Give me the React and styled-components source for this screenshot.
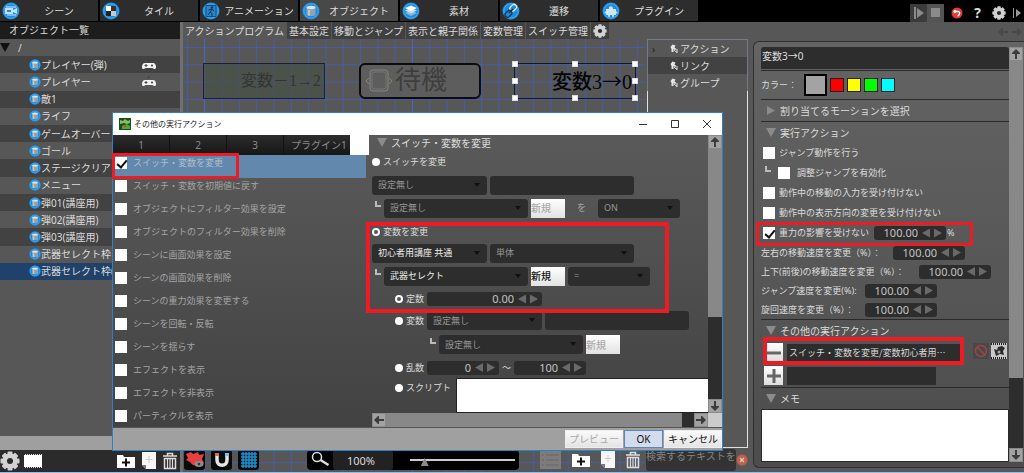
import React from "react"
import styled, { createGlobalStyle } from "styled-components"

const tabs = [
    { name: "シーン", icon: "scene" },
    { name: "タイル", icon: "tile" },
    { name: "アニメーション", icon: "anim" },
    { name: "オブジェクト", icon: "object" },
    { name: "素材", icon: "layers" },
    { name: "遷移", icon: "link" },
    { name: "プラグイン", icon: "plugin" },
]

const objects = [
    { name: "プレイヤー(弾)", pad: true },
    { name: "プレイヤー", pad: true },
    { name: "敵1" },
    { name: "ライフ" },
    { name: "ゲームオーバー" },
    { name: "ゴール" },
    { name: "ステージクリア" },
    { name: "メニュー" },
    { name: "弾01(講座用)" },
    { name: "弾02(講座用)" },
    { name: "弾03(講座用)" },
    { name: "武器セレクト枠" },
    { name: "武器セレクト枠(", selected: true },
]

const subTabs = [
    "アクションプログラム",
    "基本設定",
    "移動とジャンプ",
    "表示と親子関係",
    "変数管理",
    "スイッチ管理",
]

const actions = [
    "スイッチ・変数を変更",
    "スイッチ・変数を初期値に戻す",
    "オブジェクトにフィルター効果を設定",
    "オブジェクトのフィルター効果を削除",
    "シーンに画面効果を設定",
    "シーンの画面効果を削除",
    "シーンの重力効果を変更する",
    "シーンを回転・反転",
    "シーンを揺らす",
    "エフェクトを表示",
    "エフェクトを非表示",
    "パーティクルを表示",
]

const speeds = [
    { id: "speed-x", name: "左右の移動速度を変更（%）：", width: 132 },
    { id: "speed-y", name: "上下(前後)の移動速度を変更（%）：", width: 158 },
    { id: "speed-jump", name: "ジャンプ速度を変更(%):", width: 104 },
    { id: "speed-turn", name: "旋回速度を変更（%）：", width: 104 },
]

const handles = [
    [0, 0],
    [50, 0],
    [100, 0],
    [0, 50],
    [100, 50],
    [0, 100],
    [50, 100],
    [100, 100],
]

const discs = {
    scene: (
        <>
            <path d="M3 6h8v6H3zM11 8l4-2v6l-4-2z" fill="#bfe0f5" />
            <path d="M4 5h10M5 13h9" stroke="#d6ecfa" strokeWidth="1" />
            <path d="M5 8h4v2H5z" fill="#2f86c8" />
        </>
    ),
    tile: (
        <>
            <path d="M4 4h5v5H4z" fill="#fff" />
            <path d="M9 4h5v5H9z" fill="#333" />
            <path d="M4 9h5v5H4z" fill="#222" />
            <path d="M9 9h5v5H9z" fill="#c9c9c9" />
        </>
    ),
    anim: (
        <>
            <path d="M4 3.500h10v11H4z" fill="#2b86c8" stroke="#16507e" />
            <circle cx="10" cy="5.500" r="1.300" fill="#0f3858" />
            <path
                d="M10 7l-2 3 2 1.500v3M8 10l-2 3M6.500 8l3-1 2.500 2"
                fill="none"
                stroke="#0f3858"
                strokeWidth="1"
            />
        </>
    ),
    object: (
        <>
            <path d="M4.500 5.500v7c0 2 9 2 9 0v-7z" fill="#8fa3ad" />
            <ellipse cx="9" cy="5.500" rx="4.500" ry="1.700" fill="#dbe4e7" />
            <path d="M7 8v5.500" stroke="#c9d4d9" strokeWidth="1.500" />
        </>
    ),
    layers: (
        <>
            <path d="M9 8.500l6 2.500-6 3-6-3z" fill="#8fb6cf" />
            <path d="M9 6l6 2.500-6 3-6-3z" fill="#c7deed" />
            <path d="M9 3.500l6 2.500-6 3-6-3z" fill="#fff" />
        </>
    ),
    link: (
        <g fill="none" strokeWidth="1.300">
            <rect x="7.500" y="3.500" width="7.500" height="5" rx="2.500" transform="rotate(-45 11 6)" stroke="#dcecf8" />
            <rect x="3" y="9" width="7.500" height="5" rx="2.500" transform="rotate(-45 7 12)" stroke="#17354c" />
            <path d="M7 11l4-4" stroke="#17354c" />
        </g>
    ),
    plugin: (
        <path
            d="M4 7h3c-1-3 4-4 4 0h3v2.500c2 0 2 2 0 2V13h-2c0 3-2 3-2 0H8c0 3-2 3-2 0H4v-1.500c-2 0-2-2 0-2z"
            fill="#cfe6f5"
        />
    ),
}

function Disc({ kind, size = 18 }) {
    return (
        <svg width={size} height={size} viewBox="0 0 18 18">
            <circle cx="9" cy="9" r="8.500" fill="#1c8be0" />
            <circle cx="9" cy="9" r="7.200" fill="none" stroke="#4db1f5" strokeWidth="0.800" />
            {discs[kind]}
        </svg>
    )
}

function Gear({ size = 16 }) {
    return (
        <svg width={size} height={size} viewBox="0 0 20 20">
            <g fill="#d2d2d2">
                {[0, 45, 90, 135].map((a) => (
                    <rect
                        key={a}
                        x="7.500"
                        y="0.500"
                        width="5"
                        height="19"
                        rx="1"
                        transform={`rotate(${a} 10 10)`}
                    />
                ))}
                <circle cx="10" cy="10" r="7.500" />
            </g>
            <circle cx="10" cy="10" r="3" fill="#2a2a2a" />
        </svg>
    )
}

function Gamepad() {
    return (
        <svg width="14" height="12" viewBox="0 0 14 12">
            <path d="M6 2l1-1.500" stroke="#333" />
            <path
                d="M3 4h8c2 0 3 2 3 4 0 2.500-2 2.500-3.500 1h-7C2 10.500 0 10.500 0 8c0-2 1-4 3-4z"
                fill="#f2f2f2"
            />
            <path d="M2.500 6.500h3M4 5v3" stroke="#444" />
            <circle cx="10" cy="6.500" r="1.100" fill="#444" />
        </svg>
    )
}

function FolderPlus() {
    return (
        <svg width="18" height="16" viewBox="0 0 18 16">
            <path d="M0 2h6l1 2h11v11H0z" fill="#fff" />
            <path d="M9 5.500v8M5 9.500h8" stroke="#111" strokeWidth="2" />
        </svg>
    )
}

function PagePlus() {
    return (
        <svg width="14" height="18" viewBox="0 0 14 18">
            <path d="M0 0h14v17H4l-4-4z" fill="#f6f6f6" />
            <path d="M0 13h4v4z" fill="#777" />
            <path d="M7 4v7M3.500 7.500h7" stroke="#ccc" strokeWidth="1" />
        </svg>
    )
}

function Trash() {
    return (
        <svg width="14" height="18" viewBox="0 0 14 18">
            <path d="M4.500 3.500V1.500h5v2M0 4h14" fill="none" stroke="#ddd" strokeWidth="1.500" />
            <path d="M1.500 6.500h11v10h-11z" fill="none" stroke="#ddd" strokeWidth="1.500" />
            <path d="M4.500 7v9M7 7v9M9.500 7v9" stroke="#ddd" strokeWidth="1.200" />
        </svg>
    )
}

function Arrow({ dir }) {
    const turn = { up: 0, right: 90, down: 180, left: 270 }[dir]
    return (
        <svg width="10" height="10" viewBox="0 0 10 10">
            <path
                d="M5 0l4 4v1H6v5H4V5H1V4z"
                fill="#3c3c3c"
                transform={`rotate(${turn} 5 5)`}
            />
        </svg>
    )
}

function ActionMark() {
    return (
        <svg width="8" height="9" viewBox="0 0 8 9">
            <path d="M0.500 3l2-2.500 3 1-1 2 2 1.500-1.500 1L3.500 5v3H1.500V5z" fill="#e6e6e6" />
            <path d="M4 6l3 2.500M7 5v4" stroke="#e6e6e6" />
        </svg>
    )
}

function Corner() {
    return (
        <CornerMark width="6" height="6" viewBox="0 0 6 6">
            <path d="M1 0v5h5" fill="none" stroke="#bbb" strokeWidth="2" />
        </CornerMark>
    )
}

function Drop({ label, width, on, value }) {
    return (
        <SelectWrap $width={width}>
            <Select aria-label={label} $on={on} defaultValue={value}>
                <option>{value}</option>
            </Select>
        </SelectWrap>
    )
}

function Spinner({ id, label, value, width = 72 }) {
    return (
        <SpinWrap $width={width}>
            <SpinInput id={id} aria-label={label} defaultValue={value} />
            <Step type="button" aria-label="減らす" $side="left" />
            <Step type="button" aria-label="増やす" $side="right" />
        </SpinWrap>
    )
}

function VScroll({ thumb }) {
    return (
        <ScrollColumn>
            <ScrollEnd type="button" aria-label="上へ">
                <Arrow dir="up" />
            </ScrollEnd>
            <ScrollThumb $size={thumb} />
            <ScrollTrack $size={100 - thumb} />
            <ScrollEnd type="button" aria-label="下へ">
                <Arrow dir="down" />
            </ScrollEnd>
        </ScrollColumn>
    )
}

function TopBar() {
    return (
        <Top>
            {tabs.map((t) => (
                <TopTab key={t.name} type="button" $active={t.icon === "object"}>
                    <Disc kind={t.icon} />
                    <span>{t.name}</span>
                </TopTab>
            ))}
            <TopTools>
                <PlayButton type="button" aria-label="再生">
                    <svg width="12" height="12" viewBox="0 0 12 12">
                        <path d="M1 0h2v12H1zM4 1l7 5-7 5z" fill="#8a8a8a" />
                    </svg>
                </PlayButton>
                <PlayButton type="button" aria-label="停止" $lit>
                    <svg width="10" height="10" viewBox="0 0 10 10">
                        <path d="M0 0h9v9H0z" fill="#8a8a8a" />
                    </svg>
                </PlayButton>
                <ToolButton type="button" aria-label="元に戻す">
                    <svg width="12" height="12" viewBox="0 0 12 12">
                        <circle cx="6" cy="6" r="5.500" fill="#e23a36" />
                        <path
                            d="M3 4.500h4c2.500 0 2 3.500-0.500 4.500M4.500 3L3 4.500 4.500 6"
                            fill="none"
                            stroke="#fff"
                            strokeWidth="1.400"
                        />
                    </svg>
                </ToolButton>
                <ToolButton type="button">?</ToolButton>
                <ToolButton type="button" aria-label="設定">
                    <Gear size={14} />
                </ToolButton>
                <ToolButton type="button" aria-label="次へ">
                    <svg width="10" height="10" viewBox="0 0 10 10">
                        <path d="M1 0h1v10H1zM4 1l5 4-5 4z" fill="#999" />
                    </svg>
                </ToolButton>
            </TopTools>
        </Top>
    )
}

function ObjectList() {
    return (
        <Side>
            <SideTitle>オブジェクト一覧</SideTitle>
            <Tree>
                <RootRow>
                    <Triangle $dir="down" $color="#111" />
                    <span>/</span>
                </RootRow>
                {objects.map((o, i) => (
                    <TreeRow key={o.name} $dark={i % 2 === 0} $selected={o.selected}>
                        <Disc kind="object" size={12} />
                        <TreeName>{o.name}</TreeName>
                        {o.pad && <Gamepad />}
                    </TreeRow>
                ))}
            </Tree>
            <SideScroll />
            <SideTools>
                <Bare type="button" aria-label="設定">
                    <Gear size={20} />
                </Bare>
                <Bare type="button" aria-label="フィルム">
                    <svg width="18" height="16" viewBox="0 0 18 16">
                        <path d="M0 2h18v12H0z" fill="#fff" />
                        <path d="M1 1.500h17M1 14.500h17" stroke="#ddd" strokeDasharray="1 1" />
                    </svg>
                </Bare>
                <SideGroup>
                    <Bare type="button" aria-label="フォルダ追加">
                        <FolderPlus />
                    </Bare>
                    <Bare type="button" aria-label="追加">
                        <PagePlus />
                    </Bare>
                    <Bare type="button" aria-label="削除">
                        <Trash />
                    </Bare>
                </SideGroup>
            </SideTools>
        </Side>
    )
}

function Workspace() {
    return (
        <Center>
            <SubBar>
                {subTabs.map((t, i) => (
                    <SubTab key={t} type="button" $active={i === 0}>
                        {t}
                    </SubTab>
                ))}
                <SubTab type="button" aria-label="タブ設定">
                    <Gear size={14} />
                </SubTab>
            </SubBar>
            <Stage>
                <Lines>
                    <defs>
                        <pattern
                            id="lines"
                            x="4"
                            y="8"
                            width="17.300"
                            height="17.300"
                            patternUnits="userSpaceOnUse"
                        >
                            <path d="M0.500 0v18M0 0.500h18" stroke="#485ca4" strokeWidth="1" />
                        </pattern>
                    </defs>
                    <rect width="100%" height="100%" fill="url(#lines)" />
                    <path d="M21.500 0v500M229.500 0v500" stroke="#4a66c4" />
                </Lines>
                <Node $x={20} $kind="plain">
                    変数－1→2
                </Node>
                <Node $x={176} $kind="round">
                    <svg width="28" height="26" viewBox="0 0 28 26">
                        <rect x="5" y="2" width="18" height="21" rx="3" fill="none" stroke="#858585" />
                        <rect x="7" y="4" width="14" height="17" rx="2" fill="none" stroke="#777" />
                        <path d="M4 10l-3 3 3 3M24 10l3 3-3 3" fill="none" stroke="#8a8a50" />
                    </svg>
                    待機
                </Node>
                <Node $x={331} $kind="picked">
                    <span>
                        変数3<LongArrow>→</LongArrow>0
                    </span>
                    {handles.map(([x, y]) => (
                        <Handle key={`${x}-${y}`} $x={x} $y={y} />
                    ))}
                </Node>
                <Palette>
                    <PaletteRow>
                        <PaletteChevron>›</PaletteChevron>
                        <ActionMark />
                        アクション
                    </PaletteRow>
                    <PaletteRow $dark>
                        <PaletteChevron />
                        <ActionMark />
                        リンク
                    </PaletteRow>
                    <PaletteRow>
                        <PaletteChevron />
                        <ActionMark />
                        グループ
                    </PaletteRow>
                    <PaletteBody />
                </Palette>
                <StageTools>
                    <BlackButton type="button" aria-label="表示">
                        <svg width="21" height="18" viewBox="0 0 21 18">
                            <path d="M2 3l5-2 2 2 5-2 1 3 5-1-2 5 2 4-6 3-5-1-3-3-4-2 2-2z" fill="#e8403c" />
                            <ellipse cx="15" cy="13" rx="4.500" ry="3" fill="#8c8c8c" />
                            <circle cx="15" cy="13" r="1.300" fill="#333" />
                        </svg>
                    </BlackButton>
                    <BlackButton type="button" aria-label="吸着">
                        <svg width="18" height="18" viewBox="0 0 18 18">
                            <path
                                d="M4 3v6c0 7 10 7 10 0V3"
                                fill="none"
                                stroke="#e6e6e6"
                                strokeWidth="3.500"
                            />
                            <path d="M2 2h4v3H2z" fill="#e8693a" />
                            <path d="M12 2h4v3h-4z" fill="#6cc3ef" />
                        </svg>
                    </BlackButton>
                    <BlackButton type="button" aria-label="グリッド">
                        <svg width="18" height="18" viewBox="0 0 18 18">
                            <path
                                d="M1 3h16M1 6h16M1 9h16M1 12h16M1 15h16M3 1v16M6 1v16M9 1v16M12 1v16M15 1v16"
                                stroke="#1e93d6"
                                strokeWidth="1.400"
                            />
                        </svg>
                    </BlackButton>
                    <ZoomBox>
                        <svg width="26" height="18" viewBox="0 0 26 18">
                            <circle cx="10" cy="6" r="4.500" fill="none" stroke="#ddd" strokeWidth="1.500" />
                            <path d="M13.500 9l8 5" stroke="#ddd" strokeWidth="2.500" />
                        </svg>
                        <ZoomValue aria-label="倍率" defaultValue="100%" />
                        <ZoomSlider type="range" aria-label="ズーム" defaultValue="11" />
                    </ZoomBox>
                    <PaletteTools>
                        <Bare type="button" aria-label="一覧">
                            <svg width="21" height="18" viewBox="0 0 21 18">
                                <path d="M0 0h21v18H0z" fill="#7c7c7c" />
                                <path d="M2 4h2M6 4h13M2 9h2M6 9h13M2 14h2M6 14h13" stroke="#666" />
                            </svg>
                        </Bare>
                        <Bare type="button" aria-label="フォルダ追加">
                            <FolderPlus />
                        </Bare>
                        <Bare type="button" aria-label="追加">
                            <PagePlus />
                        </Bare>
                        <Bare type="button" aria-label="削除">
                            <Trash />
                        </Bare>
                    </PaletteTools>
                    <SearchGroup>
                        <SearchBox aria-label="検索" placeholder="検索するテキストを" />
                        <Bare type="button" aria-label="クリア">
                            <svg width="12" height="12" viewBox="0 0 12 12">
                                <circle cx="6" cy="6" r="5.500" fill="#c0604a" />
                                <path d="M4 4l4 4M8 4l-4 4" stroke="#e5c5bb" strokeWidth="1.300" />
                            </svg>
                        </Bare>
                    </SearchGroup>
                </StageTools>
            </Stage>
        </Center>
    )
}

function Properties() {
    return (
        <Aside>
            <AsideTop>
                <Arrow dir="left" />
                <Arrow dir="right" />
            </AsideTop>
            <Panel>
                <PanelBody>
                    <NameBox aria-label="名前" defaultValue="変数3→0" />
                    <ColorRow>
                        カラー：
                        <Swatch type="button" aria-label="灰" $color="#a3a3a3" $big />
                        <Swatch type="button" aria-label="赤" $color="#ff0000" />
                        <Swatch type="button" aria-label="黄" $color="#ffff00" />
                        <Swatch type="button" aria-label="緑" $color="#00ff00" />
                        <Swatch type="button" aria-label="水色" $color="#00ffff" />
                    </ColorRow>
                    <Section>
                        <Triangle $dir="right" />
                        割り当てるモーションを選択
                    </Section>
                    <Section>
                        <Triangle $dir="down" />
                        実行アクション
                    </Section>
                    <CheckRow>
                        <Check type="checkbox" id="jump" />
                        <label htmlFor="jump">ジャンプ動作を行う</label>
                    </CheckRow>
                    <CheckRow $sub>
                        <Corner />
                        <Check type="checkbox" id="adjust" />
                        <label htmlFor="adjust">調整ジャンプを有効化</label>
                    </CheckRow>
                    <CheckRow>
                        <Check type="checkbox" id="no-input" />
                        <label htmlFor="no-input">動作中の移動の入力を受け付けない</label>
                    </CheckRow>
                    <CheckRow>
                        <Check type="checkbox" id="no-turn" />
                        <label htmlFor="no-turn">動作中の表示方向の変更を受け付けない</label>
                    </CheckRow>
                    <CheckRow>
                        <Check type="checkbox" id="no-gravity" defaultChecked />
                        <GravityLabel htmlFor="no-gravity">重力の影響を受けない</GravityLabel>
                        <Spinner label="重力" value="100.00" />
                        <span>%</span>
                        <Mark $top={-1} $left={-5} $width={217} $height={24} />
                    </CheckRow>
                    {speeds.map((s) => (
                        <SpeedRow key={s.id}>
                            <SpeedLabel htmlFor={s.id} $width={s.width}>
                                {s.name}
                            </SpeedLabel>
                            <Spinner id={s.id} value="100.00" />
                        </SpeedRow>
                    ))}
                    <Section>
                        <Triangle $dir="down" />
                        その他の実行アクション
                    </Section>
                    <OtherRow>
                        <Sign type="button" aria-label="削除">
                            <svg width="14" height="14" viewBox="0 0 14 14">
                                <path d="M0 7h14" stroke="#666" strokeWidth="3" />
                            </svg>
                        </Sign>
                        <OtherBox $width={173} aria-label="アクション1" defaultValue="スイッチ・変数を変更/変数初心者用…" />
                        <OtherIcons>
                            <svg width="16" height="16" viewBox="0 0 16 16">
                                <path d="M0 0h16v16H0z" fill="#484848" />
                                <circle cx="8" cy="8" r="5.500" fill="none" stroke="#a04444" strokeWidth="1.500" />
                                <path d="M4 4l8 8" stroke="#a04444" strokeWidth="1.500" />
                            </svg>
                            <svg width="16" height="16" viewBox="0 0 16 16">
                                <path d="M0 0h16v16H0z" fill="#c8c8c8" />
                                <path d="M0 1h16M0 15h16" stroke="#222" strokeWidth="2" strokeDasharray="1 1" />
                                <path d="M3 6l3 1 1-3 4-1 3 2-2 3 1 4-4-1-4 2z" fill="#2b2b2b" />
                                <circle cx="8" cy="9" r="1.500" fill="#aaa" />
                            </svg>
                        </OtherIcons>
                        <Mark $top={-4} $left={2} $width={201} $height={28} $thick />
                    </OtherRow>
                    <OtherRow>
                        <Sign type="button" aria-label="追加">
                            <svg width="14" height="14" viewBox="0 0 14 14">
                                <path d="M0 7h14M7 0v14" stroke="#666" strokeWidth="3" />
                            </svg>
                        </Sign>
                        <OtherBox $width={149} aria-label="アクション2" />
                    </OtherRow>
                    <Section>
                        <Triangle $dir="down" />
                        メモ
                    </Section>
                    <Memo aria-label="メモ" />
                </PanelBody>
                <VScroll thumb={82} />
            </Panel>
        </Aside>
    )
}

function ActionDialog() {
    return (
        <Window role="dialog" aria-label="その他の実行アクション">
            <TitleBar>
                <svg width="12" height="12" viewBox="0 0 12 12">
                    <path d="M0 0h12v12H0z" fill="#1f4a22" />
                    <path d="M1 2l3 1 2-2 3 2 2-1v3L8 6 5 5 1 6z" fill="#7fc35c" />
                    <path d="M3 8l5-2 3 2v3H3z" fill="#3fae3a" />
                    <circle cx="6" cy="8" r="1.500" fill="#d7462f" />
                </svg>
                <TitleText>その他の実行アクション</TitleText>
                <WindowButton type="button" aria-label="最小化">
                    <svg width="8" height="8" viewBox="0 0 8 8">
                        <path d="M0 4.500h8" stroke="#333" />
                    </svg>
                </WindowButton>
                <WindowButton type="button" aria-label="最大化">
                    <svg width="8" height="8" viewBox="0 0 8 8">
                        <path d="M0.500 0.500h7v7h-7z" fill="none" stroke="#333" />
                    </svg>
                </WindowButton>
                <WindowButton type="button" aria-label="閉じる">
                    <svg width="8" height="8" viewBox="0 0 8 8">
                        <path d="M0 0l8 8M8 0l-8 8" stroke="#333" />
                    </svg>
                </WindowButton>
            </TitleBar>
            <WindowBody>
                <ActionList>
                    <PageTabs>
                        <PageTab type="button">1</PageTab>
                        <PageTab type="button">2</PageTab>
                        <PageTab type="button">3</PageTab>
                        <PageTab type="button">プラグイン1</PageTab>
                        <PageBlank />
                    </PageTabs>
                    {actions.map((a, i) => (
                        <ActionRow key={a} $selected={i === 0}>
                            <Check type="checkbox" id={`action-${i}`} defaultChecked={i === 0} />
                            <label htmlFor={`action-${i}`}>{a}</label>
                            {i === 0 && <Mark $top={-2} $left={-1} $width={127} $height={26} />}
                        </ActionRow>
                    ))}
                </ActionList>
                <Detail>
                    <DetailForm>
                        <DetailTitle>
                            <Triangle $dir="down" />
                            スイッチ・変数を変更
                        </DetailTitle>
                        <FormRow $height={24}>
                            <Radio type="radio" name="target" id="target-switch" />
                            <label htmlFor="target-switch">スイッチを変更</label>
                        </FormRow>
                        <FormRow $height={22}>
                            <Drop label="スイッチの対象" width={115} value="設定無し" />
                            <TextBox aria-label="スイッチのオブジェクト" />
                        </FormRow>
                        <FormRow $height={24} $indent={3}>
                            <Corner />
                            <Drop label="スイッチ" width={144} value="設定無し" />
                            <NewButton type="button" disabled>
                                新規
                            </NewButton>
                            <Particle>を</Particle>
                            <Drop label="スイッチの値" width={82} value="ON" />
                        </FormRow>
                        <FormRow $height={23}>
                            <Radio type="radio" name="target" id="target-variable" defaultChecked />
                            <label htmlFor="target-variable">変数を変更</label>
                            <Mark $top={2} $left={-6} $width={303} $height={91} $thick />
                        </FormRow>
                        <FormRow $height={20}>
                            <Drop label="変数の対象" width={115} value="初心者用講座 共通" on />
                            <Drop label="対象の範囲" width={144} value="単体" />
                        </FormRow>
                        <FormRow $height={26} $indent={3}>
                            <Corner />
                            <Drop label="変数" width={144} value="武器セレクト" on />
                            <NewButton type="button">新規</NewButton>
                            <Drop label="演算子" width={82} value="=" />
                        </FormRow>
                        <FormRow $height={20} $indent={23}>
                            <Radio type="radio" name="value" id="value-const" defaultChecked />
                            <ValueLabel htmlFor="value-const">定数</ValueLabel>
                            <Spinner label="定数の値" value="0.00" width={115} />
                        </FormRow>
                        <FormRow $height={23} $indent={23}>
                            <Radio type="radio" name="value" id="value-var" />
                            <ValueLabel htmlFor="value-var">変数</ValueLabel>
                            <Drop label="参照する対象" width={115} value="設定無し" />
                            <TextBox aria-label="参照するオブジェクト" />
                        </FormRow>
                        <FormRow $height={25} $indent={58}>
                            <Corner />
                            <Drop label="参照する変数" width={144} value="設定無し" />
                            <NewButton type="button" disabled>
                                新規
                            </NewButton>
                        </FormRow>
                        <FormRow $height={21} $indent={23}>
                            <Radio type="radio" name="value" id="value-random" />
                            <ValueLabel htmlFor="value-random">乱数</ValueLabel>
                            <Spinner label="最小" value="0" />
                            <span>～</span>
                            <Spinner label="最大" value="100" />
                        </FormRow>
                        <ScriptRow>
                            <Radio type="radio" name="value" id="value-script" />
                            <ScriptLabel htmlFor="value-script">スクリプト</ScriptLabel>
                            <Script aria-label="スクリプト" />
                        </ScriptRow>
                        <HScroll>
                            <ScrollEnd type="button" aria-label="左へ">
                                <Arrow dir="left" />
                            </ScrollEnd>
                            <ScrollThumb $size={96} />
                            <ScrollTrack $size={4} />
                            <ScrollEnd type="button" aria-label="右へ">
                                <Arrow dir="right" />
                            </ScrollEnd>
                        </HScroll>
                    </DetailForm>
                    <DetailScroll>
                        <VScroll thumb={67} />
                        <ScrollCorner />
                    </DetailScroll>
                </Detail>
            </WindowBody>
            <WindowFoot>
                <FootButton type="button" disabled>
                    プレビュー
                </FootButton>
                <FootButton type="button" $main>
                    OK
                </FootButton>
                <FootButton type="button">キャンセル</FootButton>
            </WindowFoot>
        </Window>
    )
}

function App() {
    return (
        <Page>
            <GlobalStyle />
            <TopBar />
            <Main>
                <ObjectList />
                <Workspace />
                <Properties />
            </Main>
            <ActionDialog />
        </Page>
    )
}

export default App

const GlobalStyle = createGlobalStyle`
    * {
        box-sizing: border-box;
    }

    body {
        margin: 0;
        background: #000;
    }

    body, button, input, select, textarea {
        font-family: "Noto Sans", "Noto Sans CJK JP", sans-serif;
        font-size: 10px;
        line-height: 14px;
        color: #dcdcdc;
    }

    button {
        padding: 0;
        border: none;
        background: none;
    }

    input, select, textarea {
        margin: 0;
        border: none;
        outline: none;
    }

    svg {
        display: block;
        flex: none;
    }
`

const Page = styled.div`
    position: relative;
    display: flex;
    flex-direction: column;
    height: 100vh;
    overflow: hidden;
    white-space: nowrap;
    border-bottom: 1px solid #8cc0ea;
`

const Main = styled.div`
    display: flex;
    flex: 1;
    min-height: 0;
    background: #575757;
`

/* top bar */
const Top = styled.header`
    display: flex;
    gap: 2px;
    height: 22px;
    background: #000;
`

const TopTab = styled.button`
    display: flex;
    align-items: center;
    width: 98px;
    height: 21px;
    padding-left: 2px;
    background: ${(props) => (props.$active ? "#484848" : "#2d2d2d")};

    span {
        flex: 1;
        text-align: center;
    }
`

const TopTools = styled.div`
    display: flex;
    align-items: flex-end;
    margin-left: auto;
`

const PlayButton = styled.button`
    display: flex;
    align-items: center;
    justify-content: center;
    width: 17px;
    height: 18px;
    background: ${(props) => (props.$lit ? "#545454" : "#3b3b3b")};
`

const ToolButton = styled.button`
    display: flex;
    align-items: center;
    justify-content: center;
    width: 21px;
    height: 18px;
    font-size: 14px;
    font-weight: bold;

    &:nth-child(3) {
        margin-left: 2px;
    }

    &:last-child {
        width: 15px;
    }
`

/* object list */
const Side = styled.aside`
    display: flex;
    flex-direction: column;
    width: 183px;
    border-right: 3px solid #707070;
`

const SideTitle = styled.div`
    height: 17px;
    padding-left: 9px;
    line-height: 17px;
    background: #1d1d1d;
`

const Tree = styled.div`
    display: grid;
    grid-auto-rows: 1fr;
    height: 241px;
`

const TreeRow = styled.div`
    display: flex;
    align-items: center;
    padding-left: 29px;
    background: ${(props) =>
        props.$selected ? "#20426a" : props.$dark ? "#424242" : "#575757"};
`

const RootRow = styled(TreeRow)`
    gap: 8px;
    padding-left: 0;
`

const TreeName = styled.span`
    width: 101px;
`

const SideScroll = styled.div`
    height: 14px;
    margin-top: auto;
    background: #9f9f9f;
`

const SideTools = styled.div`
    display: flex;
    align-items: center;
    gap: 4px;
    height: 22px;
    padding-right: 3px;
    background: #2b2b2b;
`

const SideGroup = styled.div`
    display: flex;
    align-items: center;
    gap: 7px;
    margin-left: auto;
`

const Bare = styled.button`
    display: block;
    flex: none;
`

/* canvas */
const Center = styled.main`
    display: flex;
    flex-direction: column;
    flex: 1;
    min-width: 0;
`

const SubBar = styled.div`
    display: flex;
    height: 17px;
`

const SubTab = styled.button`
    padding: 0 2px;
    margin-right: 1px;
    background: ${(props) => (props.$active ? "#575757" : "#404040")};
`

const Stage = styled.div`
    position: relative;
    display: flex;
    flex: 1;
    flex-direction: column;
    min-height: 0;
`

const Lines = styled.svg`
    position: absolute;
    inset: 0;
    width: calc(100% - 108px);
    height: 100%;
`

const nodeKinds = {
    plain: `
        border: 1px solid #1b2030;
        background: rgba(70, 80, 70, 0.7);
        color: #343434;
        font-size: 16px;
        justify-content: flex-end;
    `,
    round: `
        border: 2px solid #0c0c0c;
        border-radius: 6px;
        background: #5d5d5d;
        color: #3e3e3e;
        font-size: 26px;
    `,
    picked: `
        border: 1px solid #10182c;
        color: #050505;
        font-size: 20px;
        font-weight: 500;
        justify-content: flex-end;
    `,
}

const Node = styled.div`
    position: absolute;
    top: 24px;
    left: ${(props) => props.$x}px;
    display: flex;
    align-items: center;
    gap: 2px;
    width: 122px;
    height: 36px;
    padding: 0 3px 0 4px;
    font-family: "Liberation Serif", "Noto Sans CJK JP", serif;
    ${(props) => nodeKinds[props.$kind]}
`

const LongArrow = styled.span`
    font-family: "Noto Sans CJK JP", sans-serif;
    font-weight: normal;
`

const Handle = styled.i`
    position: absolute;
    left: ${(props) => props.$x}%;
    top: ${(props) => props.$y}%;
    width: 6px;
    height: 6px;
    margin: -3px;
    background: #fff;
    border: 1px solid #ddd;
`

const Palette = styled.div`
    position: relative;
    display: flex;
    flex: 1;
    flex-direction: column;
    align-self: flex-end;
    width: 101px;
    margin-right: 5px;
    background: #575757;
    border-top: 1px solid #777a86;
`

const PaletteRow = styled.div`
    display: flex;
    align-items: center;
    gap: 2px;
    height: 17px;
    border: 1px solid #777a86;
    border-width: 0 1px;
    background: ${(props) => (props.$dark ? "#424242" : "#575757")};
`

const PaletteChevron = styled.span`
    width: 20px;
    padding-left: 4px;
    color: #222;
`

const PaletteBody = styled.div`
    flex: 1;
    border: 1px solid #e0e0e0;
    border-top: none;
`

const StageTools = styled.div`
    position: relative;
    display: flex;
    align-items: center;
    gap: 6px;
    height: 24px;
    padding: 0 5px 0 1px;
`

const BlackButton = styled.button`
    display: flex;
    align-items: center;
    justify-content: center;
    flex: none;
    width: 21px;
    height: 20px;
    border-radius: 3px;
    background: #0a0a0a;
`

const ZoomBox = styled.div`
    display: flex;
    align-items: center;
    width: 212px;
    height: 20px;
    margin-left: 42px;
    border-radius: 4px;
    background: #000;
`

const ZoomValue = styled.input`
    width: 60px;
    height: 20px;
    padding: 0 4px 0 0;
    text-align: center;
    font-size: 11px;
    background: #222;
    border-radius: 3px;
`

const ZoomSlider = styled.input`
    appearance: none;
    width: 105px;
    height: 12px;
    margin-left: 17px;
    background: linear-gradient(#ccc, #ccc) center / 100% 2px no-repeat;

    &::-webkit-slider-thumb {
        appearance: none;
        width: 8px;
        height: 8px;
        margin-top: 4px;
        background: #8a8a8a;
        clip-path: polygon(50% 0, 100% 100%, 0 100%);
    }
`

const PaletteTools = styled.div`
    display: flex;
    align-items: center;
    gap: 11px;
    margin-left: auto;
`

const SearchGroup = styled.div`
    display: flex;
    align-items: center;
`

const SearchBox = styled.input`
    width: 90px;
    height: 22px;
    padding: 0 0 8px;
    background: #333;
    border-radius: 3px;

    &::placeholder {
        color: #858585;
    }
`

/* property panel */
const Aside = styled.aside`
    display: flex;
    flex-direction: column;
    width: 271px;
    padding-bottom: 4px;
`

const AsideTop = styled.div`
    display: flex;
    align-items: center;
    justify-content: flex-end;
    gap: 4px;
    height: 19px;
    padding-right: 2px;
    opacity: 0.5;
`

const Panel = styled.div`
    display: flex;
    flex: 1;
    min-height: 0;
    padding: 5px 1px 5px 7px;
    border: 1px solid #303030;
    border-right: none;
    border-radius: 6px 0 0 6px;
    background: linear-gradient(#646464, #4c4c4c);
`

const PanelBody = styled.div`
    display: flex;
    flex: 1;
    flex-direction: column;
    min-width: 0;
`

const NameBox = styled.input`
    height: 22px;
    padding: 0 1px 6px;
    background: #2d2d2d;
    border-radius: 3px 3px 0 0;
`

const ColorRow = styled.div`
    display: flex;
    align-items: center;
    gap: 3px;
    height: 29px;
    margin-top: 1px;
    border-top: 1px solid #2a2a2a;
    font-size: 9px;
`

const Swatch = styled.button`
    width: ${(props) => (props.$big ? 23 : 14)}px;
    height: ${(props) => (props.$big ? 22 : 14)}px;
    margin-left: ${(props) => (props.$big ? 4 : 0)}px;
    border: ${(props) => (props.$big ? "2px solid #000" : "1px solid #222")};
    background: ${(props) => props.$color};
`

const Section = styled.div`
    display: flex;
    align-items: center;
    gap: 4px;
    height: 22px;
    padding-left: 5px;
    border-top: 1px solid #2a2a2a;
`

const Triangle = styled.i`
    width: 10px;
    height: 9px;
    background: ${(props) => props.$color || "#8b8b8b"};
    clip-path: ${(props) =>
        props.$dir === "down"
            ? "polygon(0 0, 100% 0, 50% 100%)"
            : "polygon(10% 0, 90% 50%, 10% 100%)"};
`

const CheckRow = styled.div`
    position: relative;
    display: flex;
    align-items: center;
    gap: ${(props) => (props.$sub ? 7 : 4)}px;
    height: 20px;
    padding-left: ${(props) => (props.$sub ? 4 : 2)}px;
    font-size: 9px;

    span + span {
        margin-left: -3px;
    }
`

const Check = styled.input`
    appearance: none;
    flex: none;
    width: 12px;
    height: 12px;
    background: #fff;

    &:checked::after {
        content: "";
        display: block;
        width: 4px;
        height: 8px;
        margin: 1px 4px;
        border: solid #111;
        border-width: 0 2px 2px 0;
        transform: rotate(40deg);
    }
`

const CornerMark = styled.svg`
    margin-bottom: 8px;
`

const GravityLabel = styled.label`
    width: 91px;
`

const Mark = styled.i`
    position: absolute;
    z-index: 2;
    top: ${(props) => props.$top}px;
    left: ${(props) => props.$left}px;
    width: ${(props) => props.$width}px;
    height: ${(props) => props.$height}px;
    border: ${(props) => (props.$thick ? 4 : 3)}px solid #ed1c24;
    pointer-events: none;
`

const SpeedRow = styled.div`
    display: flex;
    align-items: center;
    height: 19px;
    font-size: 9px;
`

const SpeedLabel = styled.label`
    width: ${(props) => props.$width}px;
`

const SpinWrap = styled.span`
    display: flex;
    align-items: center;
    flex: none;
    gap: 4px;
    width: ${(props) => props.$width}px;
    height: 14px;
    padding-right: 4px;
    border-radius: 3px;
    background: #2d2d2d;
`

const SpinInput = styled.input`
    flex: 1;
    min-width: 0;
    height: 14px;
    padding: 0;
    text-align: right;
    font-size: 11px;
    color: #c4c4c4;
    background: none;
`

const Step = styled.button`
    width: 8px;
    height: 9px;
    background: #6a6a6a;
    clip-path: ${(props) =>
        props.$side === "left"
            ? "polygon(100% 0, 100% 100%, 0 50%)"
            : "polygon(0 0, 100% 50%, 0 100%)"};
`

const OtherRow = styled.div`
    position: relative;
    display: flex;
    align-items: center;
    gap: 4px;
    height: 23px;
    padding-left: 3px;
`

const Sign = styled.button`
    display: flex;
    align-items: center;
    justify-content: center;
    width: 19px;
    height: 19px;
    background: linear-gradient(#fff, #ddd);
`

const OtherBox = styled.input`
    width: ${(props) => props.$width}px;
    height: 18px;
    padding: 0 2px;
    font-family: "Noto Sans CJK JP", sans-serif;
    font-size: 9px;
    background: #2d2d2d;
`

const OtherIcons = styled.div`
    display: flex;
    gap: 2px;
    margin: 0 2px 4px auto;
`

const Memo = styled.textarea`
    flex: 1;
    min-height: 0;
    resize: none;
    background: #fff;
    color: #111;
    border: 1px solid #2a2a2a;
`

/* scroll bars */
const ScrollColumn = styled.div`
    display: flex;
    flex-direction: column;
    flex: 1;
    max-width: 14px;
    min-height: 0;
`

const ScrollEnd = styled.button`
    display: flex;
    align-items: center;
    justify-content: center;
    flex: none;
    width: 14px;
    height: 14px;
    background: #a2a2a2;
    border: 1px solid #8a8a8a;
`

const ScrollThumb = styled.div`
    flex: ${(props) => props.$size};
    background: #888;
`

const ScrollTrack = styled.div`
    flex: ${(props) => props.$size};
    background: #2d2d2d;
`

/* dialog */
const Window = styled.section`
    position: absolute;
    top: 112px;
    left: 112px;
    display: flex;
    flex-direction: column;
    width: 611px;
    border: 1px solid #2f80c4;
    background: #a0a0a0;
`

const TitleBar = styled.div`
    display: flex;
    align-items: center;
    gap: 3px;
    height: 22px;
    padding: 0 1px 0 6px;
    background: #fff;
`

const TitleText = styled.span`
    flex: 1;
    font-size: 8px;
    color: #222;
`

const WindowButton = styled.button`
    display: flex;
    align-items: center;
    justify-content: center;
    width: 29px;
    height: 22px;
`

const WindowBody = styled.div`
    display: flex;
    height: 293px;
    border-bottom: 1px solid #555;
    background: linear-gradient(#5a5a5a, #424242);
`

const ActionList = styled.div`
    width: 256px;
`

const PageTabs = styled.div`
    display: flex;
    height: 20px;
    background: linear-gradient(#2c2c2c, #161616);
`

const PageTab = styled.button`
    width: 57px;
    border-right: 1px solid #111;
    color: #8a8a8a;

    &:nth-child(4) {
        width: 66px;
        border: none;
        text-align: left;
        padding-left: 7px;
    }
`

const PageBlank = styled.div`
    flex: 1;
    background: #fff;
`

const ActionRow = styled.div`
    position: relative;
    display: flex;
    align-items: flex-start;
    gap: 6px;
    width: 253px;
    height: 23px;
    padding: 2px;
    font-size: 9px;
    line-height: 12px;
    color: ${(props) => (props.$selected ? "#b4bfca" : "#a4a4a4")};
    background: ${(props) => (props.$selected ? "#6388ae" : "none")};
`

const Detail = styled.div`
    display: flex;
    flex: 1;
    min-width: 0;
    padding-left: 3px;
`

const DetailForm = styled.div`
    display: flex;
    flex: 1;
    flex-direction: column;
    min-width: 0;
`

const DetailTitle = styled.div`
    display: flex;
    align-items: center;
    gap: 4px;
    height: 15px;
    padding-left: 5px;
`

const FormRow = styled.div`
    position: relative;
    display: flex;
    align-items: center;
    gap: 3px;
    height: ${(props) => props.$height}px;
    padding-left: ${(props) => props.$indent || 0}px;
    font-size: 9px;
`

const Radio = styled.input`
    appearance: none;
    flex: none;
    width: 8px;
    height: 8px;
    border-radius: 50%;
    background: #fff;

    &:checked {
        background: #555;
        border: 2px solid #fff;
    }
`

const SelectWrap = styled.span`
    position: relative;
    flex: none;
    width: ${(props) => props.$width}px;
    height: 19px;

    &::after {
        content: "";
        position: absolute;
        top: 7px;
        right: 7px;
        border: 3px solid transparent;
        border-top: 4px solid #111;
        border-bottom: none;
        pointer-events: none;
    }
`

const Select = styled.select`
    appearance: none;
    display: block;
    width: 100%;
    height: 19px;
    padding: 0 6px;
    border-radius: 3px;
    font-size: 9px;
    color: ${(props) => (props.$on ? "#eee" : "#969696")};
    background: #2d2d2d;
`

const TextBox = styled.input`
    width: 144px;
    height: 19px;
    border-radius: 3px;
    background: #2d2d2d;
`

const NewButton = styled.button`
    width: 34px;
    height: 19px;
    text-align: left;
    font-weight: 500;
    color: ${(props) => (props.disabled ? "#aaa" : "#111")};
    background: linear-gradient(#fff, #e2e2e2);
`

const Particle = styled.span`
    width: 27px;
    text-align: center;
    color: #aaa;
`

const ValueLabel = styled.label`
    width: 18px;
`

const ScriptRow = styled.div`
    display: flex;
    flex: 1;
    gap: 3px;
    min-height: 0;
    padding-left: 23px;
    font-size: 9px;

    ${Radio} {
        margin-top: 6px;
    }
`

const ScriptLabel = styled.label`
    width: 47px;
    padding-top: 3px;
`

const Script = styled.textarea`
    flex: 1;
    min-width: 0;
    resize: none;
    color: #111;
    background: #fff;
    border: 1px solid #222;
    border-right: none;
`

const HScroll = styled.div`
    display: flex;
    height: 14px;
`

const DetailScroll = styled.div`
    display: flex;
    flex-direction: column;
    width: 14px;
`

const ScrollCorner = styled.div`
    height: 14px;
    background: #ccc;
`

const WindowFoot = styled.div`
    display: flex;
    justify-content: flex-end;
    gap: 1px;
    padding: 2px 0;
`

const FootButton = styled.button`
    width: ${(props) => (props.$main ? 39 : 58)}px;
    height: 18px;
    border: 1px solid ${(props) => (props.$main ? "#5b86c0" : "#eee")};
    color: ${(props) => (props.disabled ? "#aaa" : "#111")};
    background: ${(props) =>
        props.$main ? "#d3dceb" : "linear-gradient(#fafafa, #e4e4e4)"};
`
